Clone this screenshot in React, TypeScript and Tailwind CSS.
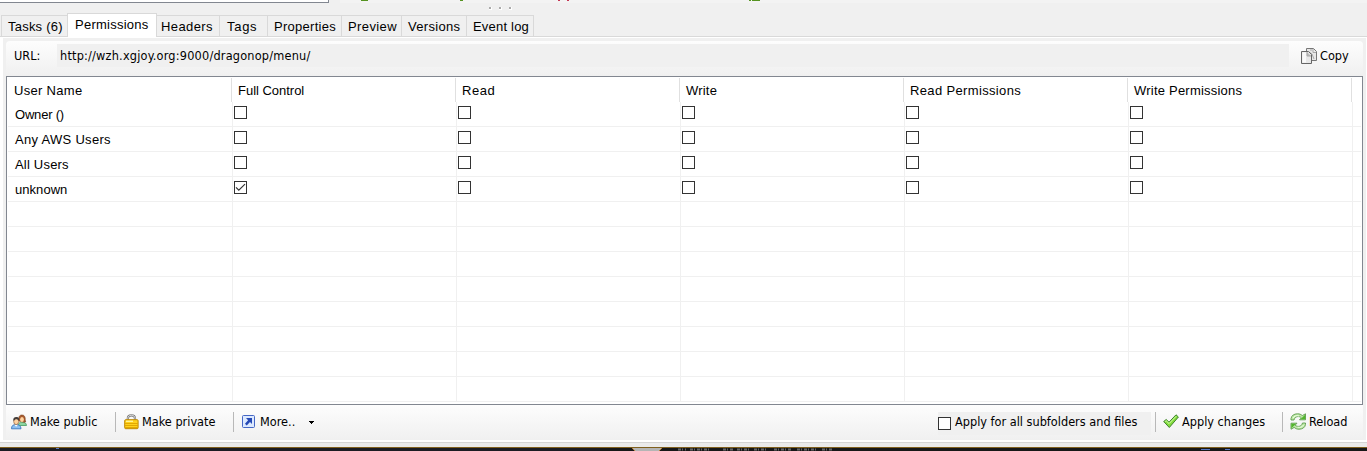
import React from "react";

const tabs = [
  { label: "Tasks (6)", box: "w-[66px] pl-[6px] border-l", text: "tracking-[0.22px]" },
  { label: "Permissions", box: "w-[90px] pl-[7px]", text: "tracking-[0.25px]", active: true },
  { label: "Headers", box: "w-[63px] pl-[4px] border-r", text: "tracking-[0.4px]" },
  { label: "Tags", box: "w-[48px] pl-[7px] border-r", text: "tracking-[0.7px]" },
  { label: "Properties", box: "w-[74px] pl-[6px] border-r", text: "tracking-[0.28px]" },
  { label: "Preview", box: "w-[60px] pl-[6px] border-r", text: "tracking-[0.4px]" },
  { label: "Versions", box: "w-[65px] pl-[6px] border-r", text: "tracking-[0.3px]" },
  { label: "Event log", box: "w-[67px] pl-[6px] border-r", text: "tracking-[0.2px]" },
];

const columns = [
  { label: "User Name", text: "tracking-[0.3px]" },
  { label: "Full Control", text: "-tracking-[0.02px]" },
  { label: "Read", text: "tracking-[0.55px]" },
  { label: "Write", text: "tracking-[0.2px]" },
  { label: "Read Permissions", text: "tracking-[0.35px]" },
  { label: "Write Permissions", text: "tracking-[0.22px]" },
];

const rows = [
  { name: "Owner ()", text: "-tracking-[0.2px]", checked: -1 },
  { name: "Any AWS Users", text: "tracking-[0.3px]", checked: -1 },
  { name: "All Users", text: "tracking-[0.2px]", checked: -1 },
  { name: "unknown", text: "tracking-[0.05px]", checked: 0 },
  ...Array.from({ length: 8 }, () => ({ name: "", text: "", checked: -1 })),
];

function CheckBox({ checked = false }: { checked?: boolean }) {
  return (
    <svg className="block shrink-0" width="13" height="13" viewBox="0 0 13 13">
      <rect x="0.5" y="0.5" width="12" height="12" fill="#fff" stroke="#333" />
      {checked && <path d="M2 6.300 4.800 9.100 11 3.100" fill="none" stroke="#333" strokeWidth="1.200" />}
    </svg>
  );
}

function CopyIcon() {
  return (
    <svg className="block shrink-0" width="16" height="17" viewBox="0 0 16 17">
      <path d="M5.500.5h7l3 3v9h-10z" fill="#e8e8e8" stroke="#777" />
      <path d="M12 1v3.500h3M9 2h2M8 4l3 2 2 5" fill="none" stroke="#aaa" />
      <path d="M.5 3.500h7l3 3v9H.5z" fill="#e8e8e8" stroke="#666" />
      <path d="M6 4v4h4" fill="#bbb" stroke="#aaa" />
      <path d="M1.500 4.500h3.500v10H1.500z" fill="#fafafa" />
    </svg>
  );
}

function PeopleIcon() {
  return (
    <svg className="block shrink-0" width="16" height="16" viewBox="0 0 16 16">
      <path d="M7.500 11c0-2 1.500-3 3.500-3s4.500 1 4.500 3.500h-8z" fill="#8cd5a0" stroke="#459b61" strokeWidth=".8" />
      <path d="M8 7c-.6-4 .3-6 3-6 2.500 0 3.500 2 3.200 5l.5 2-2 .2z" fill="#a85a2d" stroke="#77401d" strokeWidth=".6" />
      <ellipse cx="11" cy="5.400" rx="1.900" ry="2.500" fill="#ffd3a0" />
      <path d="M.5 14.800c0-3 1.500-4.300 4.500-4.300s5 1.300 5 4.300z" fill="#8cc0f2" stroke="#3c76bf" strokeWidth=".9" />
      <path d="m3.500 10.700 1.600 2.100 1.700-2.100" fill="#fff" />
      <ellipse cx="5.200" cy="7.400" rx="2.500" ry="3.200" fill="#ffd2a0" stroke="#805030" strokeWidth=".6" />
      <path d="M2.500 7C1.800 4.500 3 3 5.500 3S8.700 5 7.800 7c-.6-1.700-2-2-3.500-1.600z" fill="#423b38" />
    </svg>
  );
}

function LockIcon() {
  return (
    <svg className="block shrink-0" width="15" height="16" viewBox="0 0 15 16">
      <path d="M3.800 6.500V4.600c0-2.200 1.300-3.300 3.600-3.300S11 2.400 11 4.600v1.900" fill="none" stroke="#777" strokeWidth="2.200" />
      <path d="M3.800 6V4.600c0-2.200 1.300-3.300 3.600-3.300S11 2.400 11 4.600V6" fill="none" stroke="#e3e3e3" strokeWidth=".9" />
      <rect x=".7" y="5.700" width="13.400" height="9" rx="1" fill="#ffd21c" stroke="#be8800" />
      <path d="M2 7.300h7" stroke="#fff6a0" strokeWidth="1.300" />
      <path d="M1 9.500h13M1 11.500h13M1 13.500h13" stroke="#e2a800" />
    </svg>
  );
}

function MoreIcon() {
  return (
    <svg className="block shrink-0" width="13" height="13" viewBox="0 0 13 13">
      <rect x=".5" y=".5" width="12" height="12" rx="1" fill="#dce9ff" stroke="#4567c5" />
      <path d="M4 3h6v6L8 7.100 4.700 10.500 3 8.700 6.100 5.200z" fill="#2549b5" />
    </svg>
  );
}

function ApplyIcon() {
  return (
    <svg className="block shrink-0" width="16" height="15" viewBox="0 0 16 15">
      <path d="M.7 7.500 3.200 5.500 6 8.200 13 .8 15.400 3 6.300 13.500z" fill="#83dc3c" stroke="#3f8230" strokeLinejoin="round" />
      <path d="M2.200 7.500 3.200 6.800 6.100 9.600 13.100 2.300" fill="none" stroke="#d4ffac" />
    </svg>
  );
}

function ReloadIcon() {
  return (
    <svg className="block shrink-0" width="17" height="17" viewBox="0 0 17 17">
      <path d="M1 7V5.500C1.500 2.500 4 .8 7.500.8c2 0 3.500.6 4.800 1.800L15.500.8v6h-6l1.900-2C9.500 3 5 2.800 4 7z" fill="#bee9a6" stroke="#5c9b4e" strokeWidth=".9" />
      <path d="M15.500 10v1.500c-.5 3-3 4.700-6.500 4.700-2 0-3.500-.6-4.800-1.800L1 16.200v-6h6l-1.900 2C7 14 11.500 14.200 12.500 10z" fill="#bee9a6" stroke="#5c9b4e" strokeWidth=".9" />
      <path d="M10.500 6.300h4.600V1.700zM6 10.700H1.400v4.600z" fill="#51b52c" />
      <path d="M3 5c1-2 3.500-2.900 6-2M13.500 12c-1 2-3.500 2.900-6 2" fill="none" stroke="#eeffe4" />
    </svg>
  );
}

function Separator() {
  return <div className="h-5 w-px shrink-0 bg-[#b8b8b8]" />;
}

const tahoma = "font-['DejaVu_Sans_Condensed','DejaVu_Sans',sans-serif] font-stretch-condensed text-[12.6px] leading-[16px]";

export default function App() {
  return (
    <div className="flex h-[451px] w-[1367px] flex-col overflow-hidden bg-[#f0f0f0] font-['Liberation_Sans',Arial,sans-serif] text-[13px] leading-4 whitespace-nowrap text-black">
      <div className="flex h-[13px] shrink-0">
        <div className="h-[3px] w-[329px] border-r border-b border-[#828790] bg-white" />
        <svg className="block" width="1038" height="13" viewBox="0 0 1038 13">
          <path d="M11 0h1027v3H11z" fill="#f3f3f3" />
          <path d="M32 0h7v1h-7zM131 0h3v1h-3zM420 0h2v1h-2zM423 0h8v1h-8z" fill="#559321" />
          <path d="M229 0h2v1h-2zM238 0h2v1h-2z" fill="#c43652" />
          <path d="M160 7h3v3h-3zM180 7h3v3h-3zM170 7h3v3h-3z" fill="#fff" />
          <path d="M160 7h2v2h-2zM170 7h2v2h-2zM180 7h2v2h-2z" fill="#ababab" />
        </svg>
      </div>

      <div className="flex h-[24px] shrink-0 items-end border-b border-[#d9d9d9] pl-px">
        {tabs.map((tab) => (
          <div
            key={tab.label}
            className={`${tab.box} ${
              tab.active ? "-mb-px h-[24px] border-x border-t bg-white pt-[3px]" : "h-[21px] border-t pt-[3px]"
            } shrink-0 border-[#d9d9d9]`}
          >
            <span className={tab.text}>{tab.label}</span>
          </div>
        ))}
      </div>

      <div className="flex h-[405px] shrink-0 flex-col border-t border-r border-b-2 border-l-3 border-white pr-[3px] pl-[3px]">
        <div className={`mt-[3px] flex h-[35px] shrink-0 rounded-t bg-linear-to-b from-[#fdfdfd] to-[#f0f0f0] pl-[8px] ${tahoma}`}>
          <span className="mt-[7px] w-[43px]">URL:</span>
          <div className="mt-[3px] h-[23px] w-[1232px] bg-[#f0f0f0] pt-[4px] pl-[3px]">
            <span className="tracking-[0.2px]">http://wzh.xgjoy.org:9000/dragonop/menu/</span>
          </div>
          <div className="ml-[12px] flex gap-[3px] pt-[7px]">
            <CopyIcon />
            <span>Copy</span>
          </div>
        </div>

        <div className="flex h-[329px] w-[1357px] shrink-0 flex-col border border-[#828790] bg-white pl-px">
          <div className="mt-px flex h-[24px] shrink-0">
            {columns.map((column) => (
              <div key={column.label} className="w-[224px] shrink-0 border-r border-[#e0e0e0] pt-[5px] pl-[6px]">
                <span className={column.text}>{column.label}</span>
              </div>
            ))}
          </div>
          <div className="flex flex-col">
            {rows.map((row, r) => (
              <div key={r} className="flex h-[25px] w-[1353px] shrink-0 border-b border-[#f0f0f0]">
                <div className="w-[225px] shrink-0 border-r border-[#f0f0f0] pt-[5px] pl-[7px]">
                  <span className={row.text}>{row.name}</span>
                </div>
                {columns.slice(1).map((column, c) => (
                  <div key={column.label} className="w-[224px] shrink-0 border-r border-[#f0f0f0] pt-[4px] pl-px">
                    {row.name && <CheckBox checked={row.checked === c} />}
                  </div>
                ))}
              </div>
            ))}
          </div>
        </div>

        <div className={`flex h-[35px] shrink-0 items-start bg-linear-to-b from-[#fdfdfd] to-[#f0f0f0] pt-[7px] pl-[5px] ${tahoma}`}>
          <div className="flex w-[104px] shrink-0 pt-[2px]">
            <PeopleIcon />
            <span className="ml-[3px]">Make public</span>
          </div>
          <Separator />
          <div className="ml-[8px] flex w-[109px] shrink-0 pt-[2px]">
            <LockIcon />
            <span className="ml-[3px]">Make private</span>
          </div>
          <Separator />
          <div className="ml-[8px] flex w-[696px] shrink-0 pt-[2px]">
            <span className="mt-px"><MoreIcon /></span>
            <span className="ml-[5px] w-[49px]">More..</span>
            <svg className="mt-[7px] block" width="5" height="3" viewBox="0 0 5 3">
              <path d="M0 0h5v1H4v1H3v1H2V2H1V1H0z" />
            </svg>
          </div>
          <div className="flex h-[23px] w-[213px] shrink-0 bg-[#f0f0f0] pt-[2px]">
            <span className="mt-[3px]"><CheckBox /></span>
            <span className="ml-[4px]">Apply for all subfolders and files</span>
          </div>
          <div className="ml-[4px]"><Separator /></div>
          <div className="ml-[7px] flex w-[119px] shrink-0 pt-[2px]">
            <ApplyIcon />
            <span className="ml-[3px]">Apply changes</span>
          </div>
          <Separator />
          <div className="ml-[7px] flex pt-[2px]">
            <span className="-mt-px"><ReloadIcon /></span>
            <span className="ml-[2px]">Reload</span>
          </div>
        </div>
      </div>

      <div className="h-[5px] shrink-0 border-t border-[#d5d5d5] bg-[#ebebeb]" />
      <svg className="block shrink-0" width="1367" height="4" viewBox="0 0 1367 4">
        <path d="M0 0h1367v4H0z" fill="#1c1c22" />
        <path d="M600 1h767v3H600z" fill="#171717" />
        <path d="M632 1h30l-3 3h-24z" fill="#b5b5b5" />
        <path d="M632 1l3 3M662 1l-3 3" stroke="#b5803c" />
        <path d="M0 0h1367v1H0z" fill="#80601e" />
        <path d="M1201 2h9v1h-9zM1225 2h5v1h-5zM56 1h3v1h-3z" fill="#5877c2" />
        <path d="M678 2.500h8M690 2.500h20M723 2.500h10M737 2.500h14M754 2.500h14M774 2.500h18M797 2.500h19M822 2.500h10" stroke="#666" strokeWidth="2" strokeDasharray="3 1 1 2" />
      </svg>
    </div>
  );
}
